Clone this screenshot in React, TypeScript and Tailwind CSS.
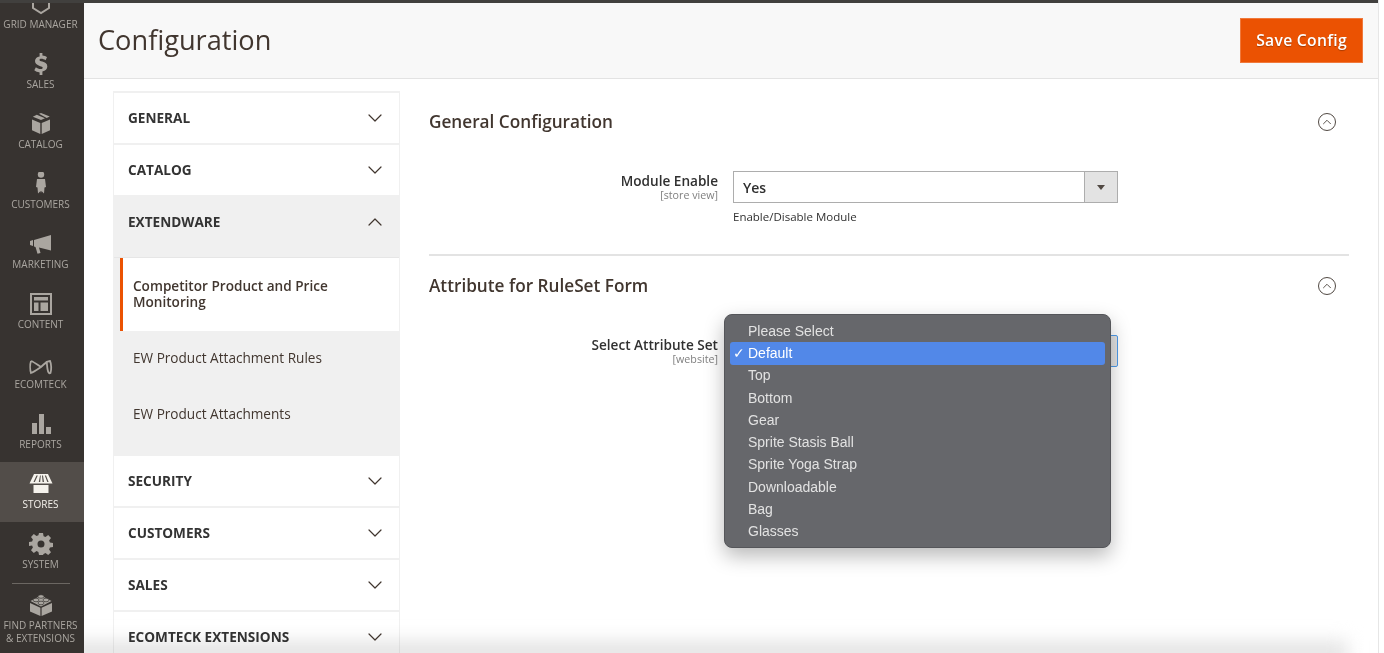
import React from "react";
import { ChevronDown, ChevronUp } from "lucide-react";

const iconClass = "w-[24px] h-[24px] shrink-0 fill-[#aaa6a0]";

// Admin rail icons
const GridIcon = () => (
  <svg viewBox="0 0 24 24" className="w-[24px] h-[24px] shrink-0" fill="none" stroke="#aaa6a0" strokeWidth="2">
    <path d="M4 8v8l8 5 8-5V8" />
  </svg>
);
const SalesIcon = () => (
  <svg viewBox="0 0 24 24" className={iconClass}>
    <path d="M10.6 1h2.800v2.600c1.900.2 3.400.8 4.600 1.600l-1.500 3c-1.200-.8-2.700-1.400-4.200-1.400-1.200 0-1.800.4-1.800 1.100 0 .8.9 1.100 2.800 1.700 3 .9 5 2.100 5 5 0 2.700-1.900 4.400-4.900 4.800V23h-2.800v-2.600c-2.100-.2-4-1-5.300-2.100l1.600-3c1.300 1 3 1.800 4.800 1.800 1.300 0 2-.5 2-1.300 0-.9-1-1.300-3-1.900-2.800-.9-4.700-2-4.700-4.800 0-2.500 1.800-4.200 4.600-4.600z" />
  </svg>
);
const CatalogIcon = () => (
  <svg viewBox="0 0 24 24" className={iconClass}>
    <path d="M3 7.500 11.300 11v11L3 18.200zM21 7.500 12.700 11v11l8.300-3.800zM7.800 2.800l8.200 3.500-4 1.800-8.200-3.400zM10 1.800 12 1l8.800 3.600-3.100 1.300z" />
  </svg>
);
const CustomersIcon = () => (
  <svg viewBox="0 0 24 24" className={iconClass}>
    <circle cx="12" cy="2.500" r="3.200" />
    <path d="M8 7h8l1 8-1.500.5-.5 6-2.500-2.500-.5 2-.5-2-2.500 2.500-.5-6L7 15z" />
  </svg>
);
const MarketingIcon = () => (
  <svg viewBox="0 0 24 24" className={iconClass}>
    <path d="M22 3v15.500L10 15.500 11.500 21l-3 .8L6.500 15 5 14.500V8zM1 9l3-1v6l-3-1z" />
  </svg>
);
const ContentIcon = () => (
  <svg viewBox="0 0 24 24" className={iconClass}>
    <path fillRule="evenodd" d="M1 1h22v22H1zm2 2v18h18V3zM5 5h14v3.500H5zM5 10.500h4.500V19H5zM11.500 10.500H19V19h-7.500z" />
  </svg>
);
const EcomteckIcon = () => (
  <svg viewBox="0 0 24 16" className="w-[24px] h-[16px] shrink-0 mt-[5px]" fill="none" stroke="#aaa6a0" strokeWidth="1.800">
    <path d="M2 2c-1 3-1 9 0 12 3-1 7-4 10-6 3-3 6-6 9-6 1.500 3 1.500 9 .5 12-1.500 1-2.500-1-3-4-.5-3-.5-6-1-8M2 2c3 1 7 4 10 6" />
  </svg>
);
const ReportsIcon = () => (
  <svg viewBox="0 0 24 24" className={iconClass}>
    <path d="M3 11h5v11H3zM10 2h5v20h-5zM17 15h5v7h-5z" />
  </svg>
);
const StoresIcon = () => (
  <svg viewBox="0 0 24 24" className="w-[24px] h-[24px] shrink-0" fill="#f5f2ec">
    <path d="M4.500 13h15v8h-15z" />
    <path d="M5 2h14l4.500 9.500H.5zM7.500 3.500 4.500 10h1.300l3-6.500zM11 3.500 9.800 10h1.400l.6-6.500zM13 3.500l.6 6.500H15l-1-6.500zM15.800 3.500 18.300 10h1.300l-2.600-6.500z" fillRule="evenodd" />
  </svg>
);
const SystemIcon = () => (
  <svg viewBox="0 0 24 24" className={iconClass}>
    <path fillRule="evenodd" d="M10 1h4l.6 3.200 1.900.8 2.700-1.900 2.800 2.800-1.900 2.700.8 1.900 3.100.5v4l-3.100.6-.8 1.900 1.900 2.700-2.800 2.800-2.700-1.900-1.900.8L14 23h-4l-.6-3.100-1.900-.8-2.700 1.900-2.800-2.800 1.900-2.700-.8-1.900L0 14v-4l3.100-.5.8-1.900L2 4.900l2.800-2.800 2.700 1.900 1.900-.8zM12 8.500a3.500 3.500 0 1 0 0 7 3.500 3.500 0 0 0 0-7z" />
  </svg>
);
const PartnersIcon = () => (
  <svg viewBox="0 0 24 24" className={iconClass}>
    <path d="M1 10l10.400 4.800V23L1 18.500zM23 10l-10.400 4.800V23L23 18.500z" />
    <path d="M12 2.500 22.500 8 12 13.500 1.500 8z" />
    <ellipse cx="12" cy="3.500" rx="3" ry="1.800" stroke="#373330" strokeWidth="0.700" />
    <ellipse cx="7" cy="7" rx="3" ry="1.800" stroke="#373330" strokeWidth="0.700" />
    <ellipse cx="17" cy="7" rx="3" ry="1.800" stroke="#373330" strokeWidth="0.700" />
    <ellipse cx="12" cy="10" rx="3" ry="1.800" stroke="#373330" strokeWidth="0.700" />
  </svg>
);

const railItems = [
  { label: "SALES", icon: <SalesIcon /> },
  { label: "CATALOG", icon: <CatalogIcon /> },
  { label: "CUSTOMERS", icon: <CustomersIcon /> },
  { label: "MARKETING", icon: <MarketingIcon /> },
  { label: "CONTENT", icon: <ContentIcon /> },
  { label: "ECOMTECK", icon: <EcomteckIcon /> },
  { label: "REPORTS", icon: <ReportsIcon /> },
];

const options = [
  "Please Select",
  "Default",
  "Top",
  "Bottom",
  "Gear",
  "Sprite Stasis Ball",
  "Sprite Yoga Strap",
  "Downloadable",
  "Bag",
  "Glasses",
];

const RailItem = ({ label, icon, active }: { label: string; icon: React.ReactNode; active?: boolean }) => (
  <div
    className={`h-[60px] shrink-0 flex flex-col items-center justify-end pb-[11px] gap-px pr-[3px] ${
      active ? "bg-[#524d49] text-[#f5f2ec]" : "text-[#aaa6a0]"
    }`}
  >
    <div className="h-[24px] flex items-center justify-center">{icon}</div>
    <span className="text-[10px] leading-[14px]">{label}</span>
  </div>
);

const MenuHead = ({ label, open }: { label: string; open?: boolean }) => (
  <div
    className={`h-[52px] shrink-0 flex items-center justify-between pl-[14px] pr-[12px] border-b-2 border-[#f0f0f0] ${
      open ? "bg-[#f0f0f0]" : "bg-white"
    }`}
  >
    <span className="text-[13.6px] font-bold text-[#333]">{label}</span>
    {open ? (
      <ChevronUp className="w-[24px] h-[24px] text-[#41362f] shrink-0" strokeWidth={1.2} />
    ) : (
      <ChevronDown className="w-[24px] h-[24px] text-[#41362f] shrink-0" strokeWidth={1.2} />
    )}
  </div>
);

const SectionHead = ({ title }: { title: string }) => (
  <div className="flex items-center justify-between pr-[13px]">
    <h2 className="text-[17.2px] font-semibold text-[#41362f] leading-[24px]">{title}</h2>
    <span className="w-[18px] h-[18px] rounded-full border border-[#514943] flex items-center justify-center">
      <ChevronUp className="w-[14px] h-[14px] text-[#514943]" strokeWidth={1.6} />
    </span>
  </div>
);

const FieldLabel = ({ label, scope }: { label: string; scope: string }) => (
  <div className="w-[304px] shrink-0 text-right pr-[15px] mt-px">
    <div className="text-[13.6px] font-semibold text-[#303030] leading-[17px]">{label}</div>
    <div className="text-[10.7px] text-[#808080] leading-[12px]">{scope}</div>
  </div>
);

export default function App() {
  return (
    <div className="w-[1384px] h-[653px] overflow-hidden bg-white font-['Open_Sans',sans-serif]">
      <div className="w-[1379px] h-full flex flex-col border-r border-[#e6e6e6]">
        <div className="h-[3px] shrink-0 bg-[#41403e]" />
        <div className="flex-1 flex min-h-0">
          {/* Admin rail */}
          <aside className="w-[84px] shrink-0 bg-[#373330] flex flex-col overflow-hidden">
            <div className="h-[39px] shrink-0 flex flex-col items-center justify-end pb-[11px] gap-px pr-[3px] text-[#aaa6a0] overflow-hidden">
              <GridIcon />
              <span className="text-[10px] leading-[14px] shrink-0">GRID MANAGER</span>
            </div>
            {railItems.map((item) => (
              <RailItem key={item.label} label={item.label} icon={item.icon} />
            ))}
            <RailItem label="STORES" icon={<StoresIcon />} active />
            <RailItem label="SYSTEM" icon={<SystemIcon />} />
            <div className="h-px shrink-0 ml-[12px] mr-[14px] mt-px bg-[#6b6762]" />
            <div className="flex flex-col items-center pt-[9px] pr-[3px] text-[#aaa6a0]">
              <PartnersIcon />
              <span className="text-[10px] leading-[13px] text-center mt-[2px]">
                FIND PARTNERS
                <br />& EXTENSIONS
              </span>
            </div>
          </aside>

          <main className="flex-1 min-w-0 flex flex-col relative overflow-hidden">
            <header className="h-[76px] shrink-0 bg-[#f8f8f8] border-b border-[#e3e3e3] flex items-center justify-between pl-[14px] pr-[15px]">
              <h1 className="text-[27.2px] text-[#41362f] font-normal leading-[36px] -mt-[2px]">Configuration</h1>
              <button className="w-[123px] h-[45px] bg-[#eb5202] border border-[#f0793b] text-white text-[15.7px] font-semibold tracking-[0.3px] [text-shadow:0_1px_1px_rgba(0,0,0,0.3)]">
                Save Config
              </button>
            </header>

            <div className="flex-1 min-h-0 flex overflow-hidden pt-[13px] pl-[29px]">
              {/* Config tabs */}
              <nav className="w-[287px] shrink-0 border-t-2 border-x border-[#f0f0f0] flex flex-col -mt-px">
                <MenuHead label="GENERAL" />
                <MenuHead label="CATALOG" />
                <MenuHead label="EXTENDWARE" open />
                <div className="h-[9px] shrink-0 bg-[#f0f0f0] border-b border-[#e6e6e6]" />
                <div className="flex flex-col bg-[#f0f0f0]">
                  <div className="h-[73px] ml-[6px] pb-px bg-white border-l-[3px] border-[#eb5202] flex items-center pl-[10px] pr-[20px] text-[13.6px] font-semibold text-[#41362f] leading-[16px]">
                    Competitor Product and Price Monitoring
                  </div>
                  <div className="h-[56px] pb-[2px] flex items-center pl-[19px] text-[13.6px] font-medium text-[#41362f]">
                    EW Product Attachment Rules
                  </div>
                  <div className="h-[56px] pb-[2px] flex items-center pl-[19px] text-[13.6px] font-medium text-[#41362f]">
                    EW Product Attachments
                  </div>
                  <div className="h-[13px]" />
                </div>
                <MenuHead label="SECURITY" />
                <MenuHead label="CUSTOMERS" />
                <MenuHead label="SALES" />
                <MenuHead label="ECOMTECK EXTENSIONS" />
              </nav>

              {/* Settings form */}
              <section className="w-[920px] ml-[29px] shrink-0 flex flex-col pt-[18px]">
                <SectionHead title="General Configuration" />
                <div className="flex mt-[37px]">
                  <FieldLabel label="Module Enable" scope="[store view]" />
                  <div>
                    <div className="w-[385px] h-[32px] bg-white border border-[#adadad] flex items-stretch">
                      <span className="flex-1 pl-[9px] flex items-center text-[14px] font-semibold text-[#303030]">Yes</span>
                      <span className="w-[33px] bg-[#e3e3e3] border-l border-[#adadad] flex items-center justify-center">
                        <span className="w-0 h-0 border-x-[4px] border-x-transparent border-t-[5px] border-t-[#514943]" />
                      </span>
                    </div>
                    <p className="text-[11.5px] font-medium text-[#303030] mt-[6px] leading-[16px]">Enable/Disable Module</p>
                  </div>
                </div>
                <div className="h-[2px] bg-[#e3e3e3] mt-[29px]" />
                <div className="mt-[18px]">
                  <SectionHead title="Attribute for RuleSet Form" />
                </div>
                <div className="flex mt-[37px]">
                  <FieldLabel label="Select Attribute Set" scope="[website]" />
                  <div className="w-[385px] h-[32px] bg-[#e3e3e3] border-[1.5px] border-[#4f9bea] rounded-[2px]" />
                </div>
              </section>
            </div>

            {/* Native select popup */}
            <div className="absolute left-[640px] top-[311px] w-[387px] h-[234px] rounded-[8px] bg-[#66676b] border border-[#55565a] shadow-[0_8px_20px_rgba(0,0,0,0.28)] p-[5px] font-['Liberation_Sans',sans-serif] text-[14px] text-[#e2e2e2]">
              {options.map((opt) => (
                <div
                  key={opt}
                  className={`h-[22.3px] flex items-center pl-[18px] relative rounded-[3px] ${
                    opt === "Default" ? "bg-[#5288e8] text-white" : ""
                  }`}
                >
                  {opt === "Default" && <span className="absolute left-[3px] text-[14px]">✓</span>}
                  {opt}
                </div>
              ))}
            </div>

            {/* soft fade along the bottom of the capture */}
            <div className="absolute left-[-20px] right-[30px] -bottom-[12px] h-[24px] bg-[#e4e4e4] blur-[9px] mix-blend-multiply pointer-events-none" />
          </main>
        </div>
      </div>
    </div>
  );
}
